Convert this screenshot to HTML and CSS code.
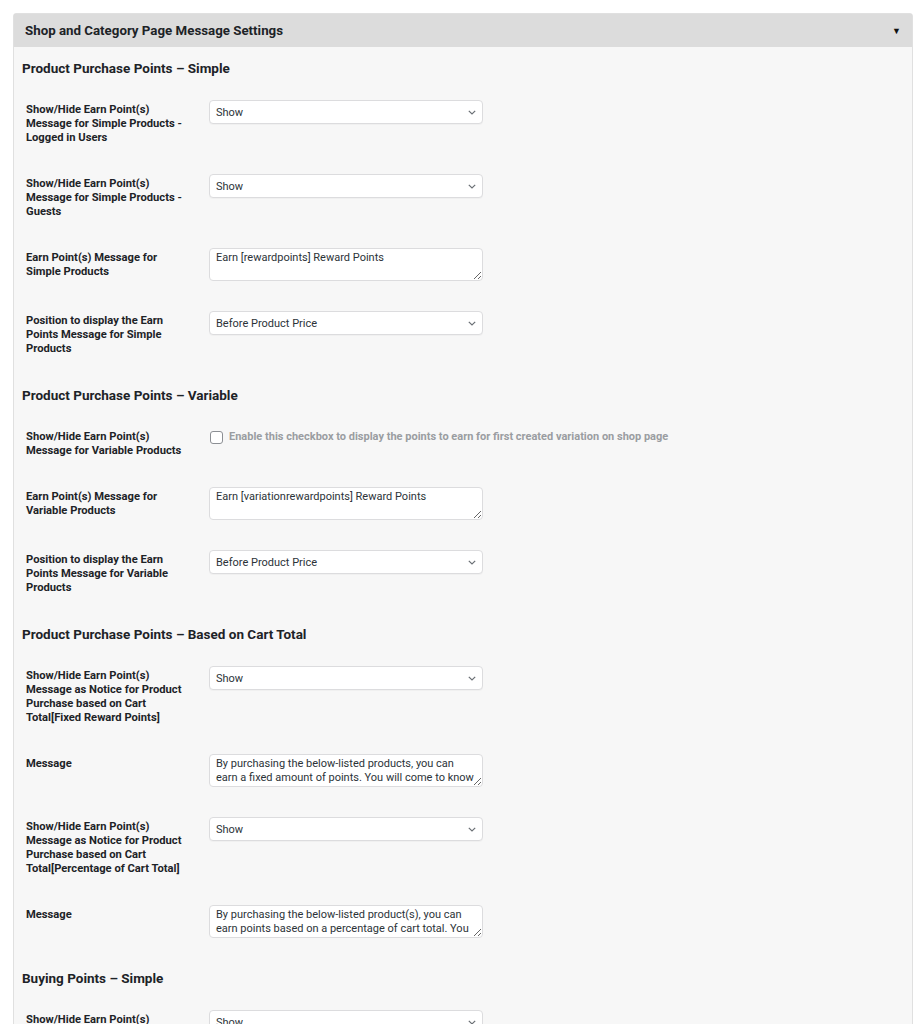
FILE: index.html
```html
<!DOCTYPE html>
<html>
<head>
    <title>Shop and Category Page Message Settings</title>
    <link rel="stylesheet" href="styles.css">
</head>
<body>
<div class="wrap">
    <div class="panel">
        <div class="panel-head">
            <span>Shop and Category Page Message Settings</span>
            <span class="toggle">&#9660;</span>
        </div>
        <div class="panel-body">

            <h3>Product Purchase Points &ndash; Simple</h3>
            <table class="form-table">
                <tr>
                    <th>Show/Hide Earn Point(s) Message for Simple Products - Logged in Users</th>
                    <td>
                        <div class="select-wrap">
                            <select><option>Show</option><option>Hide</option></select>
                            <svg class="chevron" width="8" height="5" viewBox="0 0 8 5"><path d="M0.8 0.8 L4 4 L7.2 0.8" fill="none" stroke="#6b7075" stroke-width="1.2"/></svg>
                        </div>
                    </td>
                </tr>
                <tr>
                    <th>Show/Hide Earn Point(s) Message for Simple Products - Guests</th>
                    <td>
                        <div class="select-wrap">
                            <select><option>Show</option><option>Hide</option></select>
                            <svg class="chevron" width="8" height="5" viewBox="0 0 8 5"><path d="M0.8 0.8 L4 4 L7.2 0.8" fill="none" stroke="#6b7075" stroke-width="1.2"/></svg>
                        </div>
                    </td>
                </tr>
                <tr>
                    <th>Earn Point(s) Message for Simple Products</th>
                    <td><textarea>Earn [rewardpoints] Reward Points</textarea></td>
                </tr>
                <tr>
                    <th>Position to display the Earn Points Message for Simple Products</th>
                    <td>
                        <div class="select-wrap">
                            <select><option>Before Product Price</option><option>After Product Price</option></select>
                            <svg class="chevron" width="8" height="5" viewBox="0 0 8 5"><path d="M0.8 0.8 L4 4 L7.2 0.8" fill="none" stroke="#6b7075" stroke-width="1.2"/></svg>
                        </div>
                    </td>
                </tr>
            </table>

            <h3>Product Purchase Points &ndash; Variable</h3>
            <table class="form-table">
                <tr>
                    <th>Show/Hide Earn Point(s) Message for Variable Products</th>
                    <td class="check-cell">
                        <label class="check">
                            <input type="checkbox">
                            <span>Enable this checkbox to display the points to earn for first created variation on shop page</span>
                        </label>
                    </td>
                </tr>
                <tr>
                    <th>Earn Point(s) Message for Variable Products</th>
                    <td><textarea>Earn [variationrewardpoints] Reward Points</textarea></td>
                </tr>
                <tr>
                    <th>Position to display the Earn Points Message for Variable Products</th>
                    <td>
                        <div class="select-wrap">
                            <select><option>Before Product Price</option><option>After Product Price</option></select>
                            <svg class="chevron" width="8" height="5" viewBox="0 0 8 5"><path d="M0.8 0.8 L4 4 L7.2 0.8" fill="none" stroke="#6b7075" stroke-width="1.2"/></svg>
                        </div>
                    </td>
                </tr>
            </table>

            <h3>Product Purchase Points &ndash; Based on Cart Total</h3>
            <table class="form-table">
                <tr>
                    <th>Show/Hide Earn Point(s) Message as Notice for Product Purchase based on Cart Total[Fixed Reward Points]</th>
                    <td>
                        <div class="select-wrap">
                            <select><option>Show</option><option>Hide</option></select>
                            <svg class="chevron" width="8" height="5" viewBox="0 0 8 5"><path d="M0.8 0.8 L4 4 L7.2 0.8" fill="none" stroke="#6b7075" stroke-width="1.2"/></svg>
                        </div>
                    </td>
                </tr>
                <tr>
                    <th>Message</th>
                    <td><textarea>By purchasing the below-listed products, you can earn a fixed amount of points. You will come to know the points earned after the order is completed.</textarea></td>
                </tr>
                <tr>
                    <th>Show/Hide Earn Point(s) Message as Notice for Product Purchase based on Cart Total[Percentage of Cart Total]</th>
                    <td>
                        <div class="select-wrap">
                            <select><option>Show</option><option>Hide</option></select>
                            <svg class="chevron" width="8" height="5" viewBox="0 0 8 5"><path d="M0.8 0.8 L4 4 L7.2 0.8" fill="none" stroke="#6b7075" stroke-width="1.2"/></svg>
                        </div>
                    </td>
                </tr>
                <tr>
                    <th>Message</th>
                    <td><textarea>By purchasing the below-listed product(s), you can earn points based on a percentage of cart total. You will come to know the points earned after the order is completed.</textarea></td>
                </tr>
            </table>

            <h3>Buying Points &ndash; Simple</h3>
            <table class="form-table">
                <tr>
                    <th>Show/Hide Earn Point(s) Message for Simple Products</th>
                    <td>
                        <div class="select-wrap">
                            <select><option>Show</option><option>Hide</option></select>
                            <svg class="chevron" width="8" height="5" viewBox="0 0 8 5"><path d="M0.8 0.8 L4 4 L7.2 0.8" fill="none" stroke="#6b7075" stroke-width="1.2"/></svg>
                        </div>
                    </td>
                </tr>
            </table>

        </div>
    </div>
</div>
</body>
</html>
```

FILE: styles.css
```css
body {
    margin: 0;
    background: #fff;
    font-family: Roboto, "Liberation Sans", Arial, sans-serif;
    color: #1d2327;
}
.wrap {
    padding: 13px 6px 0 13px;
}
.panel {
    border: 1px solid #e0e0e0;
    border-radius: 3px 3px 0 0;
    background: #f7f7f7;
}
.panel-head {
    height: 33px;
    padding: 0 11px 0 11px;
    background: #dcdcdc;
    display: flex;
    align-items: center;
    justify-content: space-between;
    font-size: 13.3px;
    font-weight: 700;
}
.toggle {
    font-size: 9px;
    color: #111;
}
.panel-body {
    padding: 0 8px;
}
h3 {
    margin: 14px 0 10px;
    font-size: 13.5px;
    line-height: 18px;
    font-weight: 700;
}
.panel-body h3:first-child {
    margin-top: 12px;
}
.form-table {
    border-collapse: collapse;
}
.form-table th {
    width: 160px;
    padding: 16px 23px 16px 4px;
    text-align: left;
    vertical-align: top;
    font-size: 11.2px;
    line-height: 14px;
    font-weight: 700;
}
.form-table td {
    padding: 13px 0 17px;
    vertical-align: top;
}
.form-table td.check-cell {
    padding-top: 16px;
}
.select-wrap {
    position: relative;
    width: 274px;
}
select {
    appearance: none;
    -webkit-appearance: none;
    display: block;
    width: 274px;
    height: 24px;
    padding: 0 24px 0 6px;
    border: 1px solid #dcdcde;
    border-radius: 4px;
    background: #fff;
    font-family: inherit;
    font-size: 11px;
    color: #2c3338;
    box-shadow: 0 1px 1px rgba(0, 0, 0, 0.03);
}
.chevron {
    position: absolute;
    right: 7px;
    top: 10px;
    pointer-events: none;
}
textarea {
    display: block;
    box-sizing: border-box;
    width: 274px;
    height: 33px;
    padding: 2px 6px;
    border: 1px solid #dcdcde;
    border-radius: 4px;
    background: #fff;
    font-family: inherit;
    font-size: 11px;
    line-height: 14px;
    color: #2c3338;
    overflow: hidden;
    margin: 0;
}
.check {
    display: flex;
    align-items: center;
    line-height: 14px;
    font-size: 11px;
    font-weight: 700;
    color: #9a9da1;
}
.check input {
    appearance: none;
    -webkit-appearance: none;
    width: 13px;
    height: 13px;
    margin: 0 6px 0 1px;
    border: 1px solid #8c8f94;
    border-radius: 3px;
    background: #fff;
}
```
